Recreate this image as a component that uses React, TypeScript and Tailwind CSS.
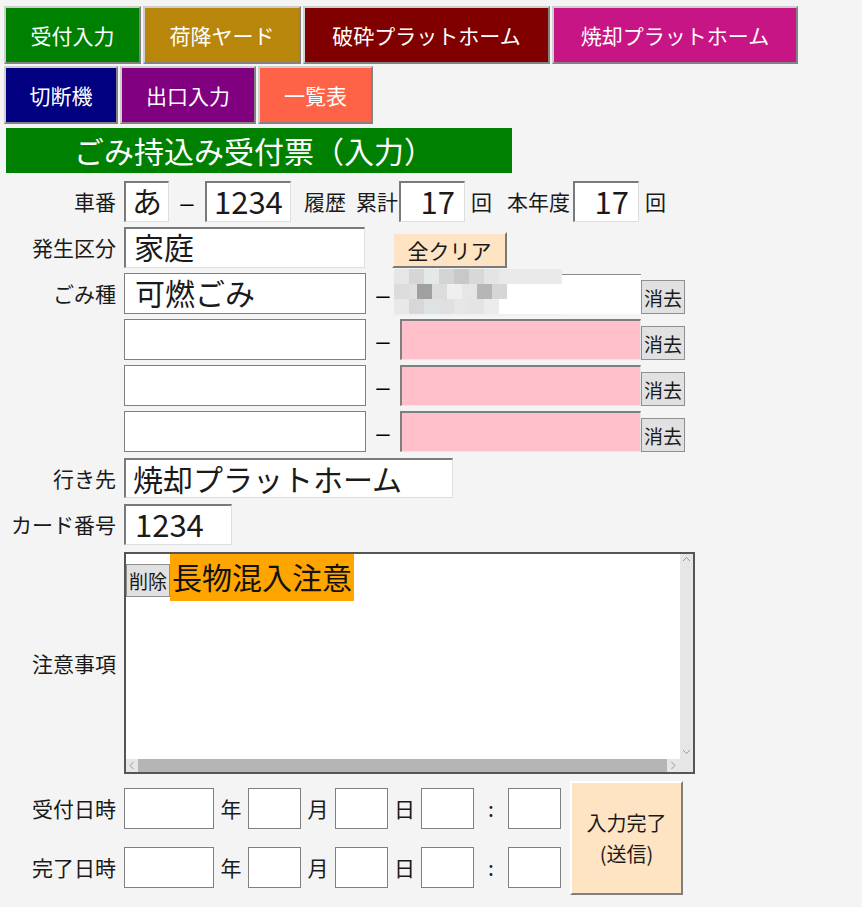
import React from "react";

const mosaicRows: { w: number; c: string }[][] = [
  [
    { w: 15, c: "#e6e6e6" },
    { w: 15, c: "#d6d6d6" },
    { w: 15, c: "#e4e8e8" },
    { w: 15, c: "#d4d4d4" },
    { w: 15, c: "#c8c8c8" },
    { w: 15, c: "#d8d8d8" },
    { w: 15, c: "#e2e4e6" },
    { w: 63, c: "#eaeaea" },
  ],
  [
    { w: 15, c: "#dcdcdc" },
    { w: 8, c: "#e0e0e0" },
    { w: 15, c: "#a0a0a0" },
    { w: 15, c: "#dcdcdc" },
    { w: 15, c: "#efefef" },
    { w: 15, c: "#e6e6e6" },
    { w: 15, c: "#b8b6b4" },
    { w: 15, c: "#d6d6d6" },
  ],
  [
    { w: 15, c: "#e8e8e8" },
    { w: 15, c: "#d8d6d6" },
    { w: 15, c: "#dde2e4" },
    { w: 15, c: "#e0e0e0" },
    { w: 15, c: "#e6e6e6" },
    { w: 15, c: "#e4e4e4" },
    { w: 15, c: "#ececec" },
  ],
];

function Label({ children }: { children: React.ReactNode }) {
  return (
    <div className="w-[116px] shrink-0 text-right text-[21px] leading-none text-[#1a1a1a]">
      {children}
    </div>
  );
}

function Dash() {
  return (
    <span className="font-['Liberation_Sans',sans-serif] text-[24px] leading-none text-black">
      –
    </span>
  );
}

function ClearBtn() {
  return (
    <button className="self-end w-[44px] h-[34px] bg-[#e1e1e1] border border-[#8f8f8f] text-[19px] leading-none text-[#1a1a1a] flex items-center justify-center">
      消去
    </button>
  );
}

function GomiRow({ first, value }: { first?: boolean; value?: string }) {
  return (
    <div className="flex items-center h-[41px] mt-[5px]">
      <div className="w-[124px] shrink-0 flex justify-end pr-[8px]">
        {first ? <Label>ごみ種</Label> : null}
      </div>
      <div className="w-[242px] h-[41px] bg-white border border-[#7f7f7f] pl-[10px] text-[30px] leading-none text-[#1a1a1a] flex items-center pb-[4px]">
        {value}
      </div>
      <div className="w-[34px] flex justify-center pt-[3px]">
        <Dash />
      </div>
      {first ? (
        <div className="relative w-[241px] h-[40px] self-end bg-white border-t border-[#8a8a8a]">
          <div className="absolute left-[-6px] top-[-6px] flex flex-col">
            {mosaicRows.map((row, i) => (
              <div key={i} className="flex h-[15px]">
                {row.map((cell, j) => (
                  <div key={j} className="h-[15px]" style={{ width: cell.w, background: cell.c }} />
                ))}
              </div>
            ))}
            <div className="h-[2px] w-[168px] bg-[#f0f0f0]" />
          </div>
        </div>
      ) : (
        <div className="w-[241px] h-[41px] bg-[#ffc0cb] border-t-2 border-l-2 border-t-[#7f7f7f] border-l-[#7f7f7f] border-r border-b border-r-[#e6e6e6] border-b-[#e6e6e6]" />
      )}
      <ClearBtn />
    </div>
  );
}

function DateRow({ label }: { label: string }) {
  const box = "h-[41px] bg-white border border-[#808080]";
  const unit = "flex justify-center text-[21px] leading-none text-[#1a1a1a]";
  return (
    <div className="flex items-center h-[41px]">
      <div className="mr-[8px]">
        <Label>{label}</Label>
      </div>
      <div className={`${box} w-[90px]`} />
      <div className={`${unit} w-[34px]`}>年</div>
      <div className={`${box} w-[53px]`} />
      <div className={`${unit} w-[34px]`}>月</div>
      <div className={`${box} w-[53px]`} />
      <div className={`${unit} w-[33px]`}>日</div>
      <div className={`${box} w-[53px]`} />
      <div className={`${unit} w-[34px]`}>:</div>
      <div className={`${box} w-[53px]`} />
    </div>
  );
}

function Chevron({ dir }: { dir: "up" | "down" | "left" | "right" }) {
  const pts =
    dir === "up"
      ? "1,5 4.5,1.5 8,5"
      : dir === "down"
      ? "1,2 4.5,5.5 8,2"
      : dir === "left"
      ? "5.5,1 2,4.5 5.5,8"
      : "2.5,1 6,4.5 2.5,8";
  return (
    <svg width="9" height="9" viewBox="0 0 9 9">
      <polyline points={pts} fill="none" stroke="#9a9a9a" strokeWidth="1" />
    </svg>
  );
}

export default function App() {
  const nav = "h-[58px] shrink-0 border-2 border-t-[#cfcfcf] border-l-[#cfcfcf] border-r-[#828282] border-b-[#828282] text-white text-[21px] leading-none flex items-center justify-center";
  const sunken = "bg-white border-t-2 border-l-2 border-t-[#7a7a7a] border-l-[#7a7a7a] border-r border-b border-r-[#dedede] border-b-[#dedede] text-[30px] leading-none text-[#1a1a1a] flex items-center";
  return (
    <div className="min-h-[907px] w-[862px] bg-[#f4f4f4] font-['Noto_Sans_CJK_JP',sans-serif] text-[#1a1a1a] overflow-hidden">
      {/* nav row 1 */}
      <div className="flex gap-[2px] pl-[4px] pt-[6px]">
        <button className={`${nav} w-[137px] bg-[#008000]`}>受付入力</button>
        <button className={`${nav} w-[158px] bg-[#b8860b]`}>荷降ヤード</button>
        <button className={`${nav} w-[247px] bg-[#800000]`}>破砕プラットホーム</button>
        <button className={`${nav} w-[246px] bg-[#c71585]`}>焼却プラットホーム</button>
      </div>
      {/* nav row 2 */}
      <div className="flex gap-[2px] pl-[4px] mt-[2px]">
        <button className={`${nav} w-[114px] bg-[#000080]`}>切断機</button>
        <button className={`${nav} w-[136px] bg-[#800080]`}>出口入力</button>
        <button className={`${nav} w-[115px] bg-[#ff6347]`}>一覧表</button>
      </div>
      {/* title */}
      <div className="ml-[6px] mt-[4px] w-[506px] h-[45px] bg-[#008000] text-white text-[30px] leading-none flex items-center pl-[68px] pb-[2px]">
        ごみ持込み受付票（入力）
      </div>

      {/* 車番 */}
      <div className="flex items-center h-[41px] mt-[8px]">
        <div className="mr-[8px]">
          <Label>車番</Label>
        </div>
        <div className={`${sunken} w-[45px] h-[41px] justify-center pb-[4px]`}>あ</div>
        <div className="w-[36px] flex justify-center pt-[3px]">
          <Dash />
        </div>
        <div className={`${sunken} w-[86px] h-[41px] pl-[7px] pb-[3px] text-[31px]`}>1234</div>
        <span className="ml-[13px] w-[42px] text-[21px] leading-none">履歴</span>
        <span className="ml-[10px] w-[42px] text-[21px] leading-none">累計</span>
        <div className={`${sunken} ml-[1px] w-[66px] h-[41px] justify-end pr-[9px] pb-[3px] text-[31px]`}>17</div>
        <span className="ml-[6px] text-[21px] leading-none">回</span>
        <span className="ml-[15px] w-[65px] text-[21px] leading-none">本年度</span>
        <div className={`${sunken} ml-[1px] w-[66px] h-[41px] justify-end pr-[9px] pb-[3px] text-[31px]`}>17</div>
        <span className="ml-[6px] text-[21px] leading-none">回</span>
      </div>

      {/* 発生区分 */}
      <div className="flex items-center h-[41px] mt-[5px]">
        <div className="mr-[8px]">
          <Label>発生区分</Label>
        </div>
        <div className={`${sunken} w-[241px] h-[41px] pl-[8px] pb-[4px]`}>家庭</div>
        <button className="self-end ml-[27px] w-[115px] h-[36px] bg-[#ffe4c4] border-2 border-t-[#f4f4f4] border-l-[#f4f4f4] border-r-[#7a7a7a] border-b-[#7a7a7a] text-[21px] leading-none text-[#1a1a1a] flex items-center justify-center">
          全クリア
        </button>
      </div>

      {/* ごみ種 */}
      <div className="mt-[1px]">
        <GomiRow first value="可燃ごみ" />
        <GomiRow />
        <GomiRow />
        <GomiRow />
      </div>

      {/* 行き先 */}
      <div className="flex items-center h-[40px] mt-[6px]">
        <div className="mr-[8px]">
          <Label>行き先</Label>
        </div>
        <div className={`${sunken} w-[329px] h-[40px] pl-[7px] pb-[2px]`}>焼却プラットホーム</div>
      </div>

      {/* カード番号 */}
      <div className="flex items-center h-[41px] mt-[6px]">
        <div className="mr-[8px]">
          <Label>カード番号</Label>
        </div>
        <div className={`${sunken} w-[108px] h-[41px] pl-[9px] pb-[3px] text-[31px]`}>1234</div>
      </div>

      {/* 注意事項 */}
      <div className="flex items-center mt-[7px]">
        <div className="mr-[8px]">
          <Label>注意事項</Label>
        </div>
        <div className="w-[571px] h-[222px] border-2 border-[#555555] bg-white flex flex-col">
          <div className="flex flex-1 min-h-0">
            <div className="flex-1 flex items-start">
              <button className="mt-[10px] w-[44px] h-[33px] bg-[#e1e1e1] border border-[#8f8f8f] text-[19px] leading-none text-[#1a1a1a] flex items-center justify-center">
                削除
              </button>
              <div className="h-[47px] bg-[#ffa500] px-[2px] text-[30px] leading-none text-[#111] flex items-center pb-[3px]">
                長物混入注意
              </div>
            </div>
            <div className="w-[13px] bg-[#e6e6e6] flex flex-col items-center justify-between py-[2px]">
              <Chevron dir="up" />
              <Chevron dir="down" />
            </div>
          </div>
          <div className="flex h-[13px]">
            <div className="flex-1 bg-[#e6e6e6] flex items-center">
              <div className="w-[12px] flex justify-center">
                <Chevron dir="left" />
              </div>
              <div className="h-[13px] w-[529px] bg-[#b5b5b5]" />
              <div className="flex-1 flex justify-center">
                <Chevron dir="right" />
              </div>
            </div>
            <div className="w-[13px] bg-[#e6e6e6]" />
          </div>
        </div>
      </div>

      {/* 日時 */}
      <div className="flex items-center mt-[7px]">
        <div className="flex flex-col gap-[18px]">
          <DateRow label="受付日時" />
          <DateRow label="完了日時" />
        </div>
        <button className="ml-[9px] w-[113px] h-[114px] bg-[#ffe4c4] border-2 border-t-white border-l-white border-r-[#808080] border-b-[#808080] text-[20px] leading-[31px] text-[#1a1a1a] flex flex-col items-center justify-center">
          <span>入力完了</span>
          <span>(送信)</span>
        </button>
      </div>
    </div>
  );
}
